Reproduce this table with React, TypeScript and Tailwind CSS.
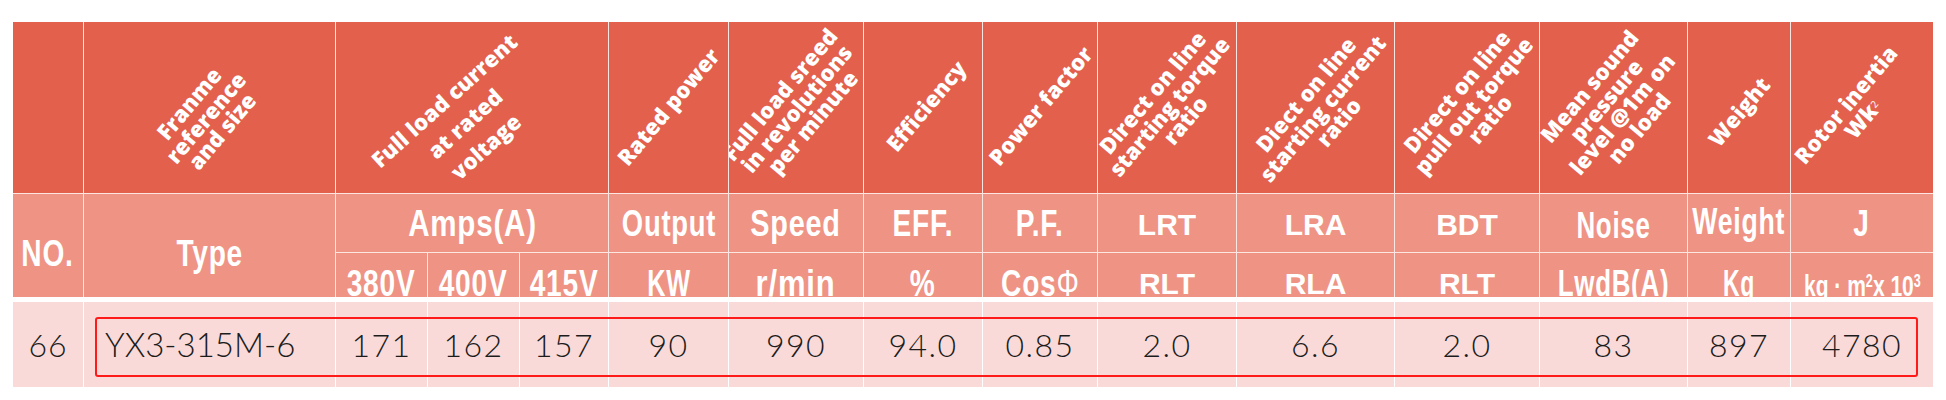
import React from 'react';

// column widths (1px gap between each)
const COLS =
  'grid-cols-[70px_251px_91px_91px_88px_119px_134px_118px_114px_138px_157px_144px_147px_102px_142px]';

interface RotProps {
  lines: React.ReactNode[];
  span?: boolean;
  loose?: boolean;
  shift?: string;
  rot?: string;
}

const RotCell: React.FC<RotProps> = ({ lines, span, loose, shift, rot }) => (
  <div
    className={`flex items-center justify-center overflow-hidden bg-[#E3604C] ${span ? 'col-span-3' : ''}`}
  >
    <div
      className={`${rot ?? '-rotate-[50deg]'} whitespace-nowrap text-center font-['Open_Sans',sans-serif] text-[22px] font-extrabold text-white ${
        loose ? 'leading-[1.4]' : 'leading-[0.98]'
      } ${shift ?? ''}`}
    >
      {lines.map((l, i) => (
        <div key={i}>{l}</div>
      ))}
    </div>
  </div>
);

interface SubProps {
  children: React.ReactNode;
  wide?: boolean;
  scale?: string;
  bottom?: boolean;
  className?: string;
}

// sub-header cell: condensed bold label
const Sub: React.FC<SubProps> = ({ children, wide, scale, bottom, className }) => (
  <div
    className={`flex justify-center overflow-hidden bg-[#EF9385] text-white ${
      bottom ? 'items-end' : 'items-center'
    } ${className ?? ''}`}
  >
    {wide ? (
      <span className="translate-y-[2px] font-['Liberation_Sans',Arial,sans-serif] text-[30px] font-bold leading-none">
        {children}
      </span>
    ) : (
      <span
        className={`inline-block font-['Liberation_Sans',Arial,sans-serif] text-[36px] font-bold leading-none tracking-[1px] ${
          scale ?? 'scale-x-[0.78]'
        } ${bottom ? 'translate-y-[5px]' : 'translate-y-[1px]'}`}
      >
        {children}
      </span>
    )}
  </div>
);

const values = ['171', '162', '157', '90', '990', '94.0', '0.85', '2.0', '6.6', '2.0', '83', '897', '4780'];

export default function App() {
  return (
    <div className="min-h-[400px] bg-white pl-[13px] pt-[22px]">
      <div className="w-[1920px]">
        {/* header */}
        <div className={`grid ${COLS} grid-rows-[171px_58px_44px] gap-px bg-[#fbe6e2]`}>
          <div className="bg-[#E3604C]" />
          <RotCell lines={['Franme', 'reference', 'and size']} shift="-translate-x-[4px] translate-y-[10px]" />
          <RotCell
            span
            loose
            rot="-rotate-[42deg]"
            lines={['Full load current', 'at rated', 'voltage']}
            shift="-translate-x-[8px] translate-y-[16px]"
          />
          <RotCell lines={['Rated power']} shift="-translate-y-[1px]" />
          <RotCell lines={['Full load sreed', 'in revolutions', 'per minute']} shift="translate-y-[1px]" />
          <RotCell lines={['Efficiency']} shift="translate-x-[3px] -translate-y-[2px]" />
          <RotCell lines={['Power factor']} shift="-translate-y-[2px]" />
          <RotCell lines={['Direct on line', 'starting torque', 'ratio']} shift="translate-x-[2px] -translate-y-[1px]" />
          <RotCell lines={['Diect on line', 'starting current', 'ratio']} shift="translate-x-[7px] translate-y-[1px]" />
          <RotCell lines={['Direct on line', 'pull out torque', 'ratio']} shift="translate-x-[6px] -translate-y-[2px]" />
          <RotCell lines={['Mean sound', 'pressure', 'level @1m on', 'no load']} />
          <RotCell lines={['Weight']} shift="translate-y-[4px]" />
          <RotCell
            lines={[
              'Rotor inertia',
              <span key="wk">
                Wk<sup className="text-[10px] font-normal">2</sup>
              </span>,
            ]}
            shift="-translate-x-[8px] translate-y-[4px]"
          />

          {/* row A */}
          <Sub className="row-span-2 pt-[14px]">NO.</Sub>
          <Sub className="row-span-2 pt-[14px]">Type</Sub>
          <Sub className="col-span-3" scale="scale-x-[0.82]">Amps(A)</Sub>
          <Sub scale="scale-x-[0.76]">Output</Sub>
          <Sub scale="scale-x-[0.8]">Speed</Sub>
          <Sub>EFF.</Sub>
          <Sub>P.F.</Sub>
          <Sub wide>LRT</Sub>
          <Sub wide>LRA</Sub>
          <Sub wide>BDT</Sub>
          <Sub scale="scale-x-[0.72]" className="pt-[4px]">Noise</Sub>
          <Sub scale="scale-x-[0.74]" className="pb-[4px]">Weight</Sub>
          <Sub>J</Sub>

          {/* row B */}
          <Sub bottom>380V</Sub>
          <Sub bottom>400V</Sub>
          <Sub bottom>415V</Sub>
          <Sub bottom scale="scale-x-[0.7]">KW</Sub>
          <Sub bottom scale="scale-x-[0.86]">r/min</Sub>
          <Sub bottom>%</Sub>
          <Sub bottom>
            Cos<span className="font-normal">Φ</span>
          </Sub>
          <Sub bottom wide>RLT</Sub>
          <Sub bottom wide>RLA</Sub>
          <Sub bottom wide>RLT</Sub>
          <Sub bottom scale="scale-x-[0.72]">LwdB(A)</Sub>
          <Sub bottom scale="scale-x-[0.64]">Kg</Sub>
          <div className="flex items-end justify-center overflow-hidden bg-[#EF9385] text-white">
            <span className="inline-block translate-y-[4px] scale-x-[0.7] whitespace-nowrap font-['Liberation_Sans',Arial,sans-serif] text-[30px] font-bold leading-none">
              kg · m<sup className="text-[18px]">2</sup>x 10<sup className="text-[18px]">3</sup>
            </span>
          </div>
        </div>

        {/* data row */}
        <div className="relative mt-[5px]">
          <div className={`grid ${COLS} h-[85px] gap-px bg-white`}>
            <div className="flex items-center justify-center bg-[#F9DAD8] font-['Lato',sans-serif] text-[32px] font-light tracking-[1px] text-[#1c1c1c]">
              66
            </div>
            <div className="flex items-center bg-[#F9DAD8] pl-[21px] font-['Lato',sans-serif] text-[33px] font-light text-[#1c1c1c]">
              YX3-315M-6
            </div>
            {values.map((v, i) => (
              <div
                key={i}
                className="flex items-center justify-center bg-[#F9DAD8] font-['Lato',sans-serif] text-[32px] font-light tracking-[1.5px] text-[#1c1c1c]"
              >
                {v}
              </div>
            ))}
          </div>
          <div className="absolute left-[82px] top-[15px] h-[60px] w-[1823px] rounded-[3px] border-2 border-[#ff1a1a]" />
        </div>
      </div>
    </div>
  );
}
